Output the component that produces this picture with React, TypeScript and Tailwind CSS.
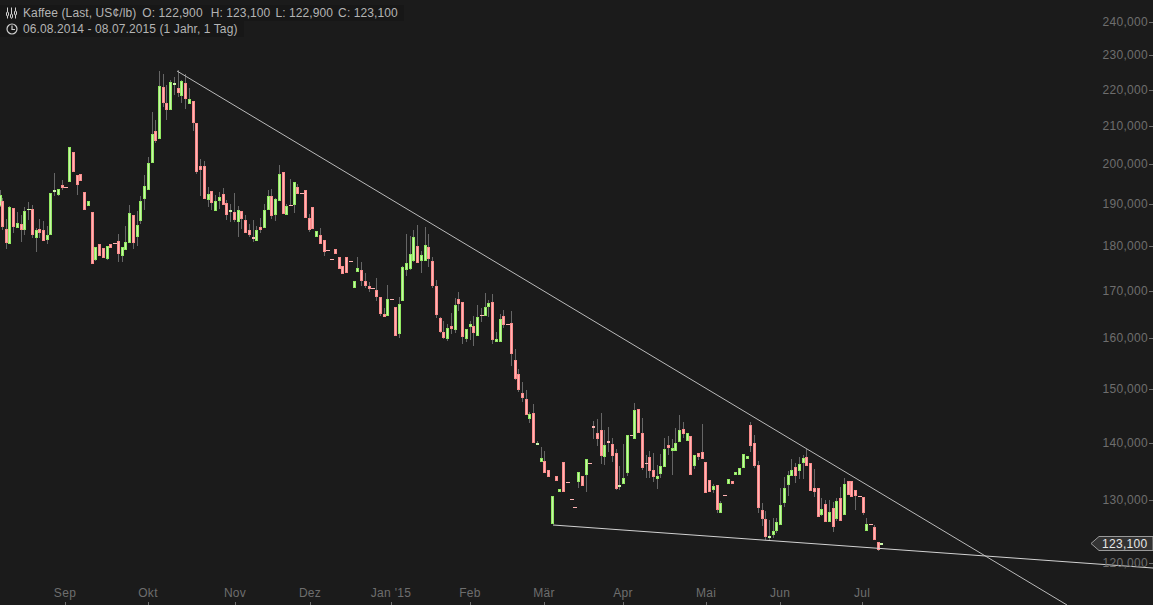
type Candle = [number, "g" | "r", number, number, number?, number?]

// x, colour, body top, body bottom, wick top, wick bottom
const candles: Candle[] = [
  [0, "g", 195, 206, 190, 207],
  [2, "r", 201, 227, 198, 230], [6, "r", 229, 243, 219, 249], [9, "g", 207, 244, 206, 244], [13, "r", 208, 227, 208, 233],
  [17, "g", 223, 228, 212, 228], [21, "r", 224, 230, 215, 242], [24, "g", 211, 230, 207, 235], [28, "g", 209, 210, 202, 220],
  [32, "r", 209, 235, 205, 238], [36, "g", 230, 238, 228, 252], [39, "r", 229, 233, 219, 238], [43, "r", 230, 241, 221, 241],
  [47, "g", 235, 240, 226, 244], [50, "g", 193, 235], [54, "g", 190, 192, 173, 196], [58, "g", 189, 195, 189, 196],
  [62, "r", 185, 188, 180, 190], [65, "r", 187, 188], [69, "g", 147, 182], [73, "r", 152, 172], [77, "r", 175, 185, 175, 195],
  [80, "r", 174, 181], [84, "r", 192, 210], [88, "g", 201, 206], [92, "r", 212, 264], [95, "g", 247, 260, 247, 261],
  [99, "r", 244, 256], [103, "r", 248, 258], [107, "g", 246, 259, 246, 260], [110, "r", 244, 248], [114, "r", 243, 244],
  [118, "r", 241, 254, 234, 262], [122, "g", 247, 256, 247, 262], [125, "g", 242, 250, 226, 250], [129, "g", 213, 243, 205, 243],
  [133, "r", 215, 243, 215, 249], [137, "g", 225, 237, 211, 246], [140, "g", 201, 221, 196, 224], [144, "g", 186, 199, 175, 210],
  [148, "g", 163, 190, 157, 190], [152, "g", 134, 163, 112, 163], [155, "r", 131, 141, 120, 143], [159, "g", 86, 139, 71, 139],
  [163, "r", 87, 103, 74, 107], [166, "r", 103, 110, 85, 120], [170, "g", 82, 110, 80, 110], [174, "g", 83, 85, 77, 95],
  [178, "r", 88, 93, 70, 97], [181, "g", 81, 96, 80, 103], [185, "r", 83, 99, 74, 109], [189, "g", 99, 104, 88, 104],
  [193, "r", 101, 123, 101, 131], [196, "r", 123, 172, 123, 174], [200, "r", 166, 170, 159, 196], [204, "r", 166, 199, 161, 199],
  [208, "g", 194, 200, 187, 207], [211, "r", 191, 203, 191, 210], [215, "g", 201, 211, 195, 211], [219, "g", 197, 201, 192, 209],
  [223, "r", 194, 205, 188, 205], [226, "r", 203, 215, 200, 220], [230, "g", 210, 212, 204, 222], [234, "r", 212, 220, 193, 222],
  [238, "g", 210, 222, 206, 237], [241, "r", 211, 219, 211, 229], [245, "r", 220, 233, 215, 233], [249, "r", 230, 235, 224, 237],
  [253, "r", 237, 239, 220, 242], [256, "g", 230, 241, 226, 241], [260, "r", 227, 230, 218, 233], [264, "g", 210, 228, 204, 228],
  [268, "g", 196, 210, 190, 210], [271, "r", 196, 216, 189, 219], [275, "g", 199, 215, 198, 221], [279, "g", 174, 201, 165, 201],
  [283, "r", 172, 214], [286, "g", 206, 215, 204, 215], [290, "r", 205, 206, 179, 206], [294, "g", 182, 205, 182, 213],
  [297, "r", 187, 194, 184, 194], [301, "r", 193, 194], [305, "r", 190, 218], [309, "r", 218, 230, 214, 232], [312, "r", 207, 229],
  [316, "g", 231, 237], [320, "r", 235, 244, 228, 244], [324, "r", 240, 252, 240, 256], [327, "r", 250, 251], [331, "r", 259, 260],
  [335, "r", 249, 254], [339, "r", 257, 269], [342, "r", 266, 274], [346, "r", 257, 273], [350, "r", 261, 262],
  [354, "g", 281, 288], [357, "g", 268, 272, 257, 272], [361, "r", 270, 281, 262, 286], [365, "r", 281, 286, 273, 288],
  [369, "r", 286, 289, 282, 292], [372, "r", 288, 289], [376, "r", 290, 297, 278, 301], [380, "r", 297, 314, 297, 316],
  [384, "r", 314, 317, 308, 317], [387, "g", 299, 316, 285, 316], [391, "r", 299, 300], [395, "r", 307, 336],
  [399, "g", 304, 334, 297, 338], [402, "g", 267, 301, 266, 301], [406, "g", 263, 270, 234, 276], [410, "g", 254, 269, 236, 270],
  [413, "g", 237, 261, 230, 262], [417, "r", 246, 263, 225, 263], [421, "g", 255, 261, 251, 273], [425, "g", 245, 261, 227, 261],
  [428, "r", 247, 259, 234, 267], [432, "r", 261, 286, 257, 288], [436, "r", 286, 315, 280, 318], [440, "r", 318, 332, 317, 333],
  [443, "r", 332, 338, 321, 339], [447, "g", 328, 339, 324, 341], [451, "r", 326, 329, 313, 334], [455, "g", 305, 330, 298, 333],
  [458, "r", 299, 304, 292, 311], [462, "r", 302, 337, 302, 344], [466, "g", 329, 339, 329, 342], [470, "g", 324, 327, 321, 340],
  [473, "r", 326, 333, 316, 346], [477, "g", 317, 336, 305, 336], [481, "r", 315, 316, 308, 322], [485, "g", 307, 316, 293, 316],
  [488, "g", 303, 307, 300, 317], [492, "r", 302, 340, 294, 344], [496, "g", 339, 342, 332, 342], [500, "g", 319, 342, 314, 342],
  [503, "r", 316, 325, 310, 328], [507, "r", 324, 325], [511, "r", 323, 354, 311, 366], [515, "r", 360, 379, 349, 380],
  [518, "r", 374, 390, 369, 392], [522, "r", 393, 398, 382, 402], [526, "r", 399, 415, 390, 415], [529, "g", 414, 419, 412, 423],
  [533, "r", 413, 443, 404, 443], [537, "g", 443, 445, 441, 445], [541, "g", 458, 462, 447, 462], [544, "r", 461, 473, 451, 473],
  [548, "r", 470, 477], [552, "g", 496, 524], [556, "r", 476, 481], [559, "g", 489, 492], [563, "r", 462, 492], [567, "r", 482, 483],
  [571, "r", 499, 500], [574, "r", 507, 508], [578, "g", 472, 482, 472, 488], [582, "r", 476, 486], [586, "g", 459, 475, 459, 492],
  [589, "r", 463, 464], [593, "r", 426, 428, 421, 439], [597, "r", 433, 439, 419, 446], [601, "r", 430, 456, 413, 464],
  [604, "g", 445, 457, 430, 465], [608, "r", 441, 443, 427, 452], [612, "r", 444, 456, 438, 462], [616, "r", 453, 489, 449, 490],
  [619, "g", 485, 487, 466, 490], [623, "g", 478, 484, 444, 484], [627, "g", 435, 473, 435, 476], [631, "r", 435, 436],
  [634, "g", 410, 439, 403, 439], [638, "r", 409, 433], [642, "r", 433, 468, 418, 470], [646, "r", 463, 464, 455, 478],
  [649, "r", 457, 471, 451, 478], [653, "r", 470, 477, 453, 482], [657, "g", 476, 479, 465, 489], [660, "g", 466, 474, 454, 478],
  [664, "g", 449, 467, 438, 467], [668, "r", 445, 448, 436, 455], [672, "g", 448, 451, 439, 475], [675, "g", 443, 451, 428, 451],
  [679, "g", 430, 442, 415, 442], [683, "r", 429, 434, 422, 438], [687, "g", 433, 441], [690, "r", 436, 475], [694, "g", 455, 466, 455, 469],
  [698, "r", 453, 457, 453, 460], [702, "r", 452, 459, 424, 459], [705, "r", 462, 493], [709, "r", 480, 492], [713, "g", 486, 490, 484, 493],
  [717, "r", 485, 510, 485, 513], [720, "g", 503, 513, 501, 513], [724, "r", 495, 496], [728, "g", 479, 484], [732, "r", 481, 484],
  [735, "g", 472, 475], [739, "g", 468, 475], [743, "g", 454, 468], [747, "g", 456, 459], [750, "r", 425, 446, 422, 452],
  [754, "r", 443, 466, 435, 468], [758, "r", 465, 508, 461, 513], [762, "r", 510, 519, 503, 526], [765, "r", 519, 537, 511, 540],
  [769, "g", 536, 538, 520, 540], [773, "g", 531, 535, 518, 538], [776, "g", 522, 531, 518, 533], [780, "g", 505, 525, 488, 525],
  [784, "g", 488, 503, 477, 507], [788, "g", 475, 485, 471, 496], [791, "g", 470, 476, 459, 476], [795, "r", 467, 476, 463, 483],
  [799, "g", 464, 471, 457, 479], [803, "g", 458, 463, 455, 479], [806, "r", 457, 466, 449, 466], [810, "r", 463, 491],
  [814, "r", 488, 492, 469, 497], [818, "r", 488, 517], [821, "g", 509, 515, 498, 516], [825, "r", 504, 522, 500, 522],
  [829, "g", 512, 522, 500, 522], [833, "r", 508, 527, 502, 532], [836, "g", 501, 519, 498, 521], [840, "r", 498, 521, 487, 521],
  [844, "g", 484, 515, 478, 515], [848, "r", 481, 495], [851, "r", 481, 497], [855, "r", 490, 496, 490, 510], [859, "r", 496, 497],
  [863, "r", 497, 513, 497, 515], [866, "g", 524, 531, 518, 531], [870, "r", 524, 525], [874, "r", 527, 540, 525, 540],
  [878, "r", 542, 550, 542, 551], [881, "g", 543, 545],
]

const priceLabels: [string, number][] = [
  ["240,000", 22], ["230,000", 55], ["220,000", 90], ["210,000", 126], ["200,000", 164], ["190,000", 204], ["180,000", 246],
  ["170,000", 291], ["160,000", 338], ["150,000", 389], ["140,000", 443], ["130,000", 500], ["120,000", 563],
]

const monthLabels: [string, number][] = [
  ["Sep", 65], ["Okt", 148], ["Nov", 235], ["Dez", 310], ["Jan '15", 391], ["Feb", 470], ["Mär", 544], ["Apr", 623],
  ["Mai", 706], ["Jun", 780], ["Jul", 862],
]

function CandleMark({ candle }: { candle: Candle }) {
  const [x, color, top, bottom, wickTop, wickBottom] = candle
  const edge = color === "g" ? "#92ea62" : "#fb8c8c"
  const core = color === "g" ? "#c8f5a8" : "#ffb4b4"
  const h = bottom - top
  return (
    <g>
      {wickTop !== undefined && (
        <rect x={x} y={wickTop} width={1} height={(wickBottom ?? bottom) - wickTop} fill="#666666" />
      )}
      {h <= 2 ? (
        <rect x={x - 1} y={top} width={h <= 1 ? 4 : 3} height={h} fill={core} />
      ) : (
        <>
          <rect x={x - 1} y={top} width={3} height={h} fill={edge} />
          <rect x={x} y={top + 1} width={1} height={h - 2} fill={core} />
        </>
      )}
    </g>
  )
}

function Chart() {
  return (
    <svg width={1153} height={605} viewBox="0 0 1153 605" className="block font-['Liberation_Sans',sans-serif] text-[12px]">
      <g shapeRendering="crispEdges">
        {candles.map((c, i) => (
          <CandleMark key={i} candle={c} />
        ))}
        {priceLabels.map(([, y], i) => (
          <rect key={i} x={1149} y={y} width={4} height={1} fill="#6e6e6e" />
        ))}
        {monthLabels.map(([, x], i) => (
          <rect key={i} x={x} y={602} width={1} height={3} fill="#6e6e6e" />
        ))}
      </g>
      <line x1={177} y1={71} x2={1067} y2={605} stroke="#b9b9b9" strokeWidth={1} />
      <line x1={553} y1={525} x2={1153} y2={568} stroke="#d2d2d2" strokeWidth={1} />
      {priceLabels.map(([label, y]) => (
        <text key={label} x={1148} y={y + 4} textAnchor="end" letterSpacing={0.3} fill="#6e6e6e">
          {label}
        </text>
      ))}
      {monthLabels.map(([label, x]) => (
        <text key={label} x={x} y={597} textAnchor="middle" letterSpacing={0.3} fill="#6e6e6e">
          {label}
        </text>
      ))}
      <path d="M1091 543.5 L1099 536.5 H1153 V550.5 H1099 Z" fill="#333333" stroke="#9a9a9a" strokeWidth={1} />
      <text x={1102} y={548} letterSpacing={0.3} fill="#e6e6e6">
        123,100
      </text>
    </svg>
  )
}

function Header() {
  return (
    <div className="absolute left-0 top-[5px] flex flex-col items-start font-['Liberation_Sans',sans-serif] text-[12px] leading-[16px] tracking-[0.1px] text-[#b4b4b4]">
      <div className="flex items-center bg-[#171717] pl-1.5 pr-1.5">
        <svg width={12} height={12} viewBox="0 0 12 12" fill="none" stroke="#cfcfcf" className="mr-[5px]">
          <path d="M1.5 0.5V11.5M5.5 0.5V11.5M9.5 0.5V11.5" />
          <rect x={0.5} y={5} width={2} height={4} rx={1} fill="#171717" />
          <rect x={4.5} y={7} width={2} height={4} rx={1} fill="#171717" />
          <rect x={8.5} y={4} width={2} height={4} rx={1} fill="#171717" />
        </svg>
        <span className="mr-[6px]">Kaffee (Last, US¢/lb)</span>
        <span className="mr-[8px]">O: 122,900</span>
        <span className="mr-[5px]">H: 123,100</span>
        <span className="mr-[5px]">L: 122,900</span>
        <span>C: 123,100</span>
      </div>
      <div className="flex items-center bg-[#171717] pl-1.5 pr-1.5">
        <svg width={12} height={12} viewBox="0 0 12 12" fill="none" stroke="#cfcfcf" strokeWidth={1.2} className="mr-[5px]">
          <circle cx={6} cy={6} r={5} />
          <path d="M6 2.5V6.5H9" />
        </svg>
        <span>06.08.2014 - 08.07.2015 (1 Jahr, 1 Tag)</span>
      </div>
    </div>
  )
}

export default function App() {
  return (
    <div className="relative h-[605px] w-[1153px] overflow-hidden bg-[#1b1b1b]">
      <Chart />
      <Header />
    </div>
  )
}
